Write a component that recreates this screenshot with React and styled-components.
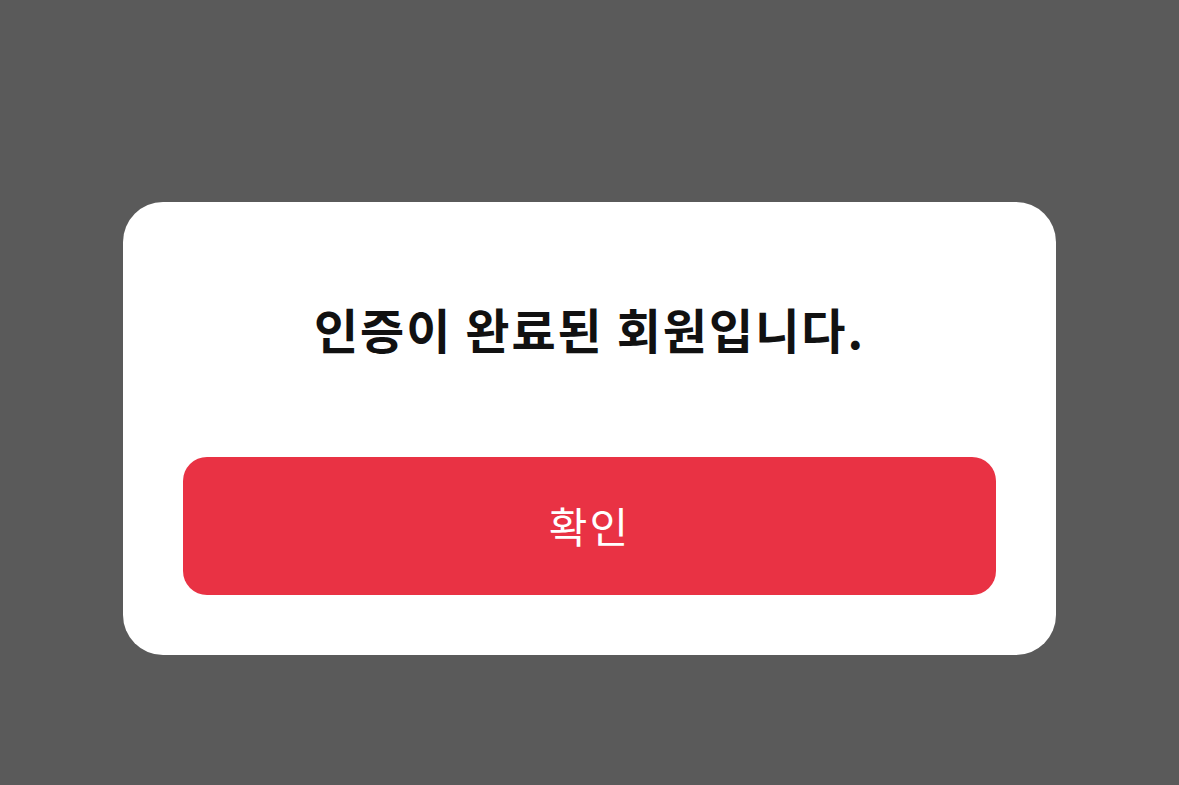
import styled, { createGlobalStyle } from "styled-components";

const GlobalStyle = createGlobalStyle`
  html, body {
    margin: 0;
    padding: 0;
    background: #5a5a5a;
    font-family: "Noto Sans CJK KR", "Noto Sans", sans-serif;
  }
`;

const Page = () => {
  return (
    <>
      <GlobalStyle />
      <Overlay>
        <Dialog>
          <Title>인증이 완료된 회원입니다.</Title>
          <ConfirmButton type="button">확인</ConfirmButton>
        </Dialog>
      </Overlay>
    </>
  );
};

const Overlay = styled.div`
  width: 1179px;
  height: 785px;
  box-sizing: border-box;
  padding-top: 202px;
  display: flex;
  justify-content: center;
  align-items: flex-start;
  background: #5a5a5a;
`;

const Dialog = styled.div`
  width: 933px;
  height: 453px;
  box-sizing: border-box;
  padding: 96px 60px 60px;
  background: #ffffff;
  border-radius: 40px;
  display: flex;
  flex-direction: column;
`;

const Title = styled.h2`
  margin: 0 0 99px;
  height: 60px;
  line-height: 60px;
  font-size: 48px;
  font-weight: 700;
  color: #111111;
  text-align: center;
  letter-spacing: 2px;
`;

const ConfirmButton = styled.button`
  width: 100%;
  height: 138px;
  border: none;
  border-radius: 24px;
  background: #e93244;
  color: #ffffff;
  font-family: inherit;
  font-size: 42px;
  font-weight: 400;
  letter-spacing: 2px;
  padding: 0 0 4px;
  cursor: pointer;
`;

export default Page;
